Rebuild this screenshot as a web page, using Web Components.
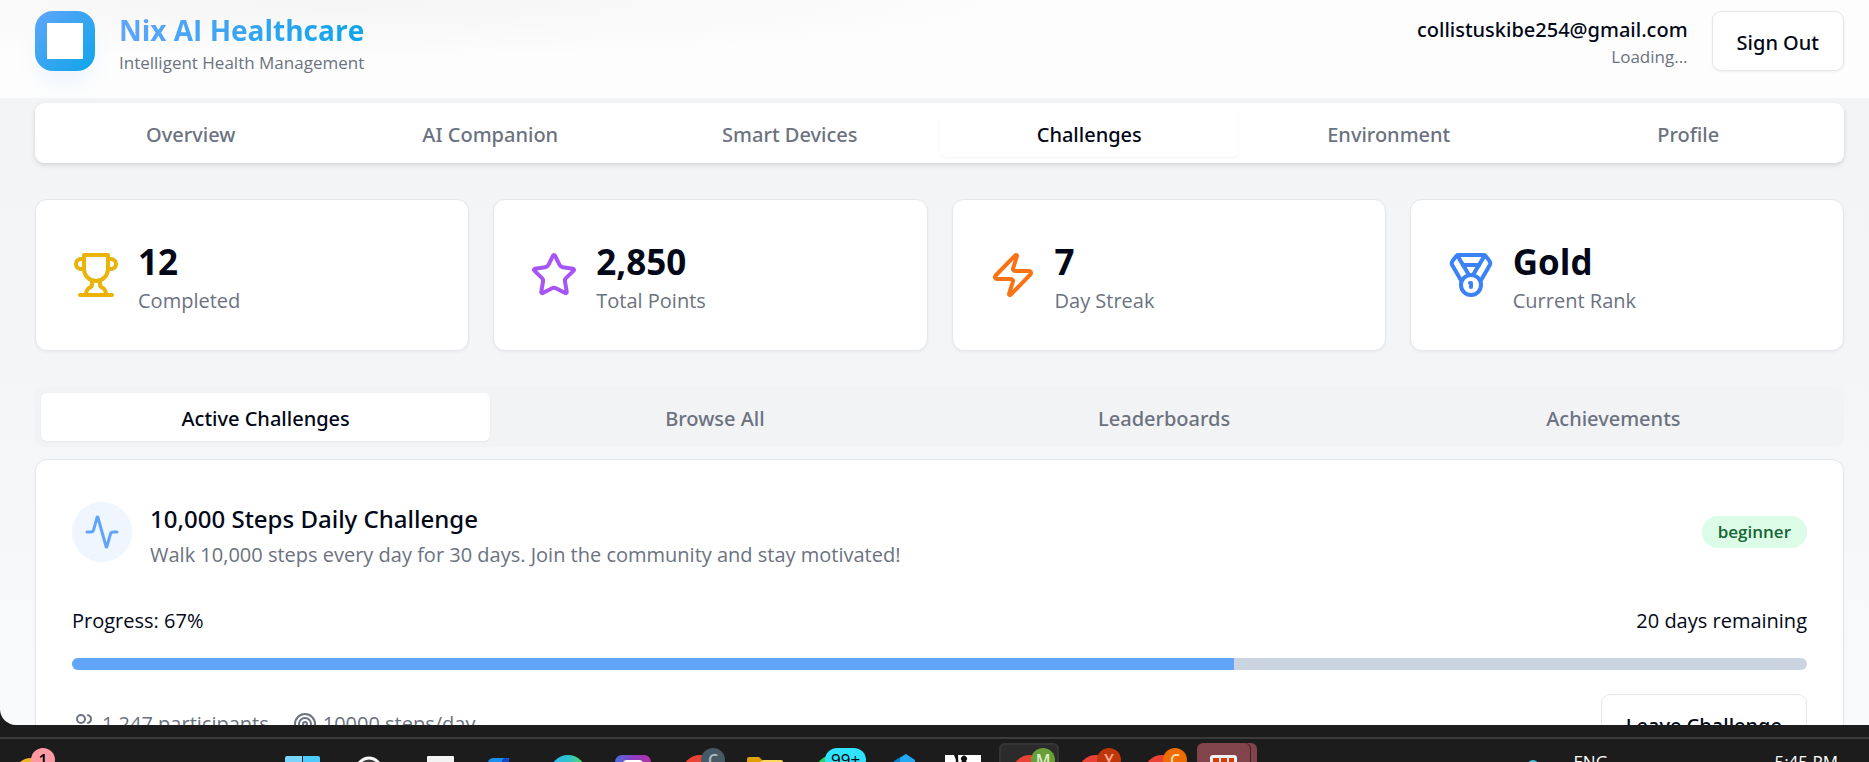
<!DOCTYPE html>
<html lang="en">
<head>
<meta charset="utf-8">
<title>Nix AI Healthcare</title>
<style>
    html{
        --ink:#020817;
        --muted:#6b7280;
        --line:#e5e7eb;
        --blue:#60a5fa;
        --sm:17px;
        --medium:500 20px/30px "Noto Sans","Open Sans",sans-serif;
        font-family:"Open Sans","Noto Sans",sans-serif;
        font-size:20px;
        line-height:30px;
        color:var(--ink);
    }
    body{
        margin:0;
        height:100vh;
        display:flex;
        flex-direction:column;
        overflow:hidden;
        background:#1c1c1c;
    }
</style>
</head>
<body>
<app-window>
    <app-header heading="Nix AI Healthcare" tagline="Intelligent Health Management" email="collistuskibe254@gmail.com" status="Loading..."></app-header>
    <app-main>
        <tab-bar class="raised" label="Sections" items="Overview,AI Companion,Smart Devices,Challenges,Environment,Profile" active="3"></tab-bar>
        <stat-grid>
            <stat-card value="12" label="Completed" icon="trophy" color="#eab308"></stat-card>
            <stat-card value="2,850" label="Total Points" icon="star" color="#a855f7"></stat-card>
            <stat-card value="7" label="Day Streak" icon="zap" color="#f97316"></stat-card>
            <stat-card value="Gold" label="Current Rank" icon="medal" color="#3b82f6"></stat-card>
        </stat-grid>
        <tab-bar class="flat" label="Challenge views" items="Active Challenges,Browse All,Leaderboards,Achievements" active="0"></tab-bar>
        <challenge-card progress="67" remaining="20 days remaining" level="beginner" people="1,247 participants" goal="10000 steps/day">
            <span slot="title">10,000 Steps Daily Challenge</span>
            <span slot="text">Walk 10,000 steps every day for 30 days. Join the community and stay motivated!</span>
        </challenge-card>
    </app-main>
</app-window>
<task-bar>
    <task-item slot="start" icon="weather" name="Widgets" badge="1" tint="#ff99a4" ink="#000000"></task-item>
    <task-item icon="start" name="Start"></task-item>
    <task-item icon="search" name="Search"></task-item>
    <task-item icon="view" name="Task view"></task-item>
    <task-item icon="mail" name="Mail"></task-item>
    <task-item icon="edge" name="Edge"></task-item>
    <task-item icon="chat" name="Chat"></task-item>
    <task-item icon="chrome" name="Chrome" badge="C" tint="#455a64" ink="#b0bec5"></task-item>
    <task-item icon="folder" name="Files"></task-item>
    <task-item icon="phone" name="Messages" badge="99+" tint="#30e3ff" ink="#000000"></task-item>
    <task-item icon="box" name="Editor"></task-item>
    <task-item icon="photo" name="Photo"></task-item>
    <task-item icon="chrome" name="Chrome" badge="M" tint="#689f38" ink="#dcedc8" state="open"></task-item>
    <task-item icon="chrome" name="Chrome" badge="Y" tint="#bf360c" ink="#ffab91"></task-item>
    <task-item icon="chrome" name="Chrome" badge="C" tint="#ef6c00" ink="#ffe0b2"></task-item>
    <task-item icon="tiles" name="Snipping" state="alert"></task-item>
    <span slot="lang">ENG</span>
    <time slot="clock">5:45 PM</time>
</task-bar>

<script>
const ICONS={
    trophy:'<path d="M6 9H4.5a2.5 2.5 0 0 1 0-5H6"/><path d="M18 9h1.500a2.500 2.500 0 0 0 0-5H18"/><path d="M4 22h16"/><path d="M10 14.660V17c0 .550-.470.980-.970 1.210C7.850 18.750 7 20.240 7 22"/><path d="M14 14.660V17c0 .550.470.980.970 1.210C16.150 18.750 17 20.240 17 22"/><path d="M18 2H6v7a6 6 0 0 0 12 0V2Z"/>',
    star:'<path d="M11.525 2.295a.53.53 0 0 1 .95 0l2.310 4.679a2.123 2.123 0 0 0 1.595 1.160l5.166.756a.53.53 0 0 1 .294.904l-3.736 3.638a2.123 2.123 0 0 0-.611 1.878l.882 5.140a.53.53 0 0 1-.771.560l-4.618-2.428a2.122 2.122 0 0 0-1.973 0L6.396 21.010a.53.53 0 0 1-.770-.560l.881-5.139a2.122 2.122 0 0 0-.611-1.879L2.160 9.795a.53.53 0 0 1 .294-.906l5.165-.755a2.122 2.122 0 0 0 1.597-1.160z"/>',
    zap:'<path d="M4 14a1 1 0 0 1-.78-1.630l9.900-10.200a.5.5 0 0 1 .860.460l-1.920 6.020A1 1 0 0 0 13 10h7a1 1 0 0 1 .780 1.630l-9.900 10.200a.5.5 0 0 1-.860-.460l1.920-6.020A1 1 0 0 0 11 14z"/>',
    medal:'<path d="M7.210 15 2.660 7.140a2 2 0 0 1 .130-2.200L4.400 2.800A2 2 0 0 1 6 2h12a2 2 0 0 1 1.600.8l1.600 2.140a2 2 0 0 1 .140 2.200L16.790 15"/><path d="M11 12 5.120 2.200"/><path d="m13 12 5.880-9.800"/><path d="M8 7h8"/><circle cx="12" cy="17" r="5"/><path d="M12 18v-2h-.5"/>',
    activity:'<path d="M22 12h-2.480a2 2 0 0 0-1.930 1.460l-2.350 8.360a.25.25 0 0 1-.480 0L9.240 2.180a.25.25 0 0 0-.480 0l-2.350 8.360A2 2 0 0 1 4.490 12H2"/>',
    users:'<path d="M16 21v-2a4 4 0 0 0-4-4H6a4 4 0 0 0-4 4v2"/><circle cx="9" cy="7" r="4"/><path d="M22 21v-2a4 4 0 0 0-3-3.870"/><path d="M16 3.130a4 4 0 0 1 0 7.750"/>',
    target:'<circle cx="12" cy="12" r="10"/><circle cx="12" cy="12" r="6"/><circle cx="12" cy="12" r="2"/>'
};

// taskbar glyphs, drawn in a 60x48 cell
const GLYPHS={
    weather:'<circle cx="24" cy="32" r="17" fill="#f0b429"/>',
    start:'<path d="M12 15a2 2 0 0 1 2-2h15v17H12z" fill="#79d5fb"/><path d="M30 13h15a2 2 0 0 1 2 2v15H30z" fill="#4ccbff"/>',
    search:'<circle cx="30" cy="27" r="12" fill="#3a3a3a" stroke="#f5f5f5" stroke-width="3"/>',
    view:'<rect x="22" y="13" width="27" height="27" rx="1" fill="#f3f3f3"/>',
    mail:'<path d="M17 19q1-4 6-4h15v20H14z" fill="#1a8fee"/><path d="M31 19q0-4 4-4t3 4v16h-7z" fill="#1346c8"/>',
    edge:'<defs><linearGradient id="g"><stop offset="0" stop-color="#35b5ee"/><stop offset=".5" stop-color="#2cc3d0"/><stop offset="1" stop-color="#63d85a"/></linearGradient></defs><circle cx="31" cy="30" r="18" fill="url(#g)"/>',
    chat:'<defs><linearGradient id="g"><stop offset="0" stop-color="#4c6ce0"/><stop offset=".5" stop-color="#8b3fc4"/><stop offset="1" stop-color="#b431a4"/></linearGradient></defs><rect x="12" y="12" width="36" height="36" rx="7" fill="url(#g)"/><rect x="19" y="17" width="22" height="24" rx="5" fill="#ffffff"/>',
    chrome:'<circle cx="31" cy="30" r="18" fill="#ea4335"/>',
    folder:'<path d="M12 16q0-2 2-2h10l4 4h20v22H12z" fill="#e0a100"/><path d="M25 19l3-2h18q2 0 2 2v20H25z" fill="#ffd85e"/>',
    phone:'<circle cx="32" cy="30" r="18" fill="#25d366"/>',
    box:'<path d="M30 16l9-5v20l-13 3V19z" fill="#0a7dc4"/><path d="M39 11l9 6v18H33V15z" fill="#23a9f2"/>',
    photo:'<rect x="12" y="12" width="36" height="36" fill="#ffffff"/><path d="M21 12l2 5-2 15h5l-1-20zM29 18a3 3 0 1 1 4 0l2 3v15h-8V21z" fill="#111111"/>',
    tiles:'<rect x="13" y="12" width="27" height="30" rx="3" fill="#eef0f3"/><path d="M16 15h6v5h-6zM24 15h6v5h-6zM32 15h5v5h-5zM16 22h6v5h-6zM24 22h6v5h-6zM32 22h5v5h-5z" fill="#d83b01"/>'
};

function icon(name,size){
    return `<svg width="${size}" height="${size}" viewBox="0 0 24 24" fill="none" stroke="currentColor" stroke-width="2" stroke-linecap="round" stroke-linejoin="round" aria-hidden="true">${ICONS[name]}</svg>`;
}

class BaseElement extends HTMLElement {
    constructor() {
        super();
        this._shadowRoot=this.attachShadow({mode: 'open'});
    }

    connectedCallback() {
        this._shadowRoot.innerHTML=this.template;
    }

    attr(name) {
        return this.getAttribute(name) || '';
    }
}

class AppWindow extends BaseElement {
    get template(){
        return `
        <style>
            :host{
                display:block;
                flex:1;
                min-height:0;
                overflow:hidden;
                border-bottom-left-radius:16px;
                background:linear-gradient(#f3f4f6,#f4f5f7 50%,#f8fafc);
            }
        </style>
        <slot></slot>
        `;
    }
}

class AppMain extends BaseElement {
    get template(){
        return `
        <style>
            :host{
                display:flex;
                flex-direction:column;
                padding:5px 25px 36px 35px;
            }
        </style>
        <slot></slot>
        `;
    }
}

class AppHeader extends BaseElement {
    get template(){
        return `
        <style>
            :host{
                display:block;
                background:radial-gradient(ellipse 720px 60px at 340px 0,#f5f5f5,#fdfdfd);
            }
            header{
                display:flex;
                align-items:flex-start;
                gap:24px;
                padding:11px 25px 21px 35px;
            }
            .logo{
                width:60px;
                height:60px;
                display:grid;
                place-items:center;
                border-radius:18px;
                background:linear-gradient(135deg,#60a5fa,#0ea5e9);
                box-shadow:0 15px 22px -4px rgba(96,165,250,.1);
            }
            .logo i{
                width:36px;
                height:36px;
                background:#ffffff;
            }
            .brand{
                flex:1;
            }
            h1{
                margin:0;
                width:fit-content;
                font-size:28px;
                line-height:38px;
                font-weight:700;
                color:transparent;
                background:linear-gradient(90deg,#60a5fa,#0ea5e9);
                background-clip:text;
            }
            p{
                margin:0;
                font-size:var(--sm);
                line-height:24px;
                color:var(--muted);
            }
            .brand p{
                line-height:28px;
            }
            .user{
                padding-top:4px;
                text-align:right;
            }
            .user b{
                display:block;
                font:var(--medium);
            }
            button{
                height:60px;
                padding:3px 24px 0;
                border:1px solid var(--line);
                border-radius:9px;
                background:#ffffff;
                font:var(--medium);
                color:inherit;
                box-shadow:0 1px 3px rgba(0,0,0,.06);
            }
        </style>
        <header>
            <div class="logo"><i></i></div>
            <div class="brand">
                <h1>${this.attr('heading')}</h1>
                <p>${this.attr('tagline')}</p>
            </div>
            <div class="user">
                <b>${this.attr('email')}</b>
                <p>${this.attr('status')}</p>
            </div>
            <button type="button">Sign Out</button>
        </header>
        `;
    }
}

class TabBar extends BaseElement {
    get template(){
        const active=Number(this.attr('active'));
        const tabs=this.attr('items').split(',').map((text,i)=>
            `<button type="button" role="tab" aria-selected="${i===active}">${text}</button>`
        ).join('');
        return `
        <style>
            :host{
                display:block;
                border-radius:9px;
            }
            :host(.raised){
                background:#ffffff;
                box-shadow:0 2px 5px rgba(0,0,0,.14);
            }
            :host(.flat){
                background:#f2f3f5;
            }
            div{
                display:grid;
                grid-auto-flow:column;
                grid-auto-columns:1fr;
                padding:6px;
            }
            button{
                height:48px;
                padding:3px 0 0;
                border:0;
                border-radius:6px;
                background:none;
                font:var(--medium);
                color:var(--muted);
            }
            button[aria-selected=true]{
                background:#ffffff;
                color:var(--ink);
                box-shadow:0 1px 3px rgba(0,0,0,.05);
            }
        </style>
        <div role="tablist" aria-label="${this.attr('label')}">${tabs}</div>
        `;
    }
}

class StatGrid extends BaseElement {
    get template(){
        return `
        <style>
            :host{
                display:grid;
                grid-template-columns:repeat(4,1fr);
                gap:24px;
                margin:36px 0;
            }
        </style>
        <slot></slot>
        `;
    }
}

class StatCard extends BaseElement {
    get template(){
        return `
        <style>
            :host{
                display:flex;
                align-items:center;
                gap:18px;
                padding:34px 36px;
                border:1px solid var(--line);
                border-radius:12px;
                background:#ffffff;
                box-shadow:0 1px 3px rgba(0,0,0,.05);
            }
            svg{
                color:${this.attr('color')};
            }
            div{
                padding-top:4px;
            }
            strong{
                display:block;
                font-size:35px;
                line-height:48px;
                font-weight:700;
            }
            span{
                display:block;
                color:var(--muted);
            }
        </style>
        ${icon(this.attr('icon'),48)}
        <div>
            <strong>${this.attr('value')}</strong>
            <span>${this.attr('label')}</span>
        </div>
        `;
    }
}

class ChallengeCard extends BaseElement {
    get template(){
        const progress=this.attr('progress');
        return `
        <style>
            :host{
                display:flex;
                flex-direction:column;
                margin-top:12px;
                padding:34px 36px 36px;
                border:1px solid var(--line);
                border-radius:12px;
                background:#ffffff;
                box-shadow:0 1px 3px rgba(0,0,0,.05);
            }
            .row{
                display:flex;
                align-items:center;
                justify-content:space-between;
            }
            .round{
                width:60px;
                height:60px;
                display:grid;
                place-items:center;
                margin-right:18px;
                border-radius:50%;
                background:#eff6ff;
                color:var(--blue);
            }
            .about{
                flex:1;
                padding-top:4px;
            }
            h2{
                margin:0;
                font:var(--medium);
                font-size:24px;
                line-height:42px;
            }
            p{
                margin:0;
                color:var(--muted);
            }
            .level{
                padding:4px 16px;
                border-radius:16px;
                background:#dcfce7;
                color:#166534;
                font-size:var(--sm);
                line-height:24px;
                font-weight:600;
            }
            .status{
                margin:36px 0 22px;
            }
            progress{
                display:block;
                width:100%;
                height:12px;
                margin-bottom:24px;
                border:0;
                border-radius:6px;
                overflow:hidden;
                appearance:none;
                background:#cbd5e1;
            }
            progress::-webkit-progress-bar{
                background:#cbd5e1;
            }
            progress::-webkit-progress-value{
                background:var(--blue);
            }
            .facts{
                display:flex;
                gap:24px;
                color:var(--muted);
            }
            .facts span{
                display:flex;
                align-items:center;
                gap:6px;
            }
            button{
                height:60px;
                padding:3px 24px 0;
                border:1px solid var(--line);
                border-radius:9px;
                background:#ffffff;
                font:var(--medium);
                color:inherit;
            }
        </style>
        <div class="row">
            <div class="round">${icon('activity',36)}</div>
            <div class="about">
                <h2><slot name="title"></slot></h2>
                <p><slot name="text"></slot></p>
            </div>
            <div class="level">${this.attr('level')}</div>
        </div>
        <div class="row status">
            <label for="progress">Progress: ${progress}%</label>
            <span>${this.attr('remaining')}</span>
        </div>
        <progress id="progress" max="100" value="${progress}"></progress>
        <div class="row">
            <div class="facts">
                <span>${icon('users',24)}${this.attr('people')}</span>
                <span>${icon('target',24)}${this.attr('goal')}</span>
            </div>
            <button type="button">Leave Challenge</button>
        </div>
        `;
    }
}

class TaskBar extends BaseElement {
    get template(){
        return `
        <style>
            :host{
                display:block;
                height:25px;
                margin-top:12px;
                border-top:2px solid #3b3b3b;
                box-sizing:border-box;
                overflow:hidden;
                color:#ffffff;
                font-size:var(--sm);
                line-height:24px;
            }
            nav{
                display:flex;
                align-items:flex-start;
                padding:4px 31px 0 7px;
            }
            .apps{
                flex:1;
                display:flex;
                gap:6px;
                padding-left:206px;
            }
            .tray{
                display:flex;
                gap:34px;
                padding-top:7px;
            }
            .dot{
                width:12px;
                height:12px;
                margin-top:10px;
                border-radius:50%;
                background:#4cc2d8;
            }
            .clock{
                width:196px;
                text-align:right;
            }
        </style>
        <nav aria-label="Taskbar">
            <slot name="start"></slot>
            <div class="apps"><slot></slot></div>
            <div class="tray">
                <i class="dot"></i>
                <slot name="lang"></slot>
                <div class="clock"><slot name="clock"></slot></div>
            </div>
        </nav>
        `;
    }
}

class TaskItem extends BaseElement {
    get template(){
        const badge=this.attr('badge');
        return `
        <style>
            :host{
                display:block;
                flex:none;
            }
            button{
                position:relative;
                display:block;
                width:60px;
                height:48px;
                padding:0;
                border:0;
                border-radius:6px;
                background:none;
            }
            :host([state=open]) button{
                background:#2b2b2b;
                box-shadow:inset 0 0 0 2px #353535;
            }
            :host([state=alert]) button{
                width:54px;
                background:#80444a;
                box-shadow:6px 0 0 #80444a,inset -1px 0 0 #3b2224;
            }
            svg{
                display:block;
            }
            span{
                position:absolute;
                top:5px;
                left:32px;
                box-sizing:border-box;
                min-width:24px;
                border-radius:12px;
                background:${this.attr('tint')};
                color:${this.attr('ink')};
                font:600 16px/24px "Open Sans",sans-serif;
                text-align:center;
            }
            .long{
                left:24px;
                padding:0 6px;
                font-weight:400;
                font-size:var(--sm);
            }
            :host([slot=start]) span{
                left:24px;
            }
        </style>
        <button type="button" aria-label="${this.attr('name')}">
            <svg width="60" height="48" viewBox="0 0 60 48" aria-hidden="true">${GLYPHS[this.attr('icon')]}</svg>
            ${badge ? `<span class="${badge.length>1 ? 'long' : 'short'}">${badge}</span>` : ''}
        </button>
        `;
    }
}

customElements.define('app-window', AppWindow);
customElements.define('app-main', AppMain);
customElements.define('app-header', AppHeader);
customElements.define('tab-bar', TabBar);
customElements.define('stat-grid', StatGrid);
customElements.define('stat-card', StatCard);
customElements.define('challenge-card', ChallengeCard);
customElements.define('task-bar', TaskBar);
customElements.define('task-item', TaskItem);
</script>
</body>
</html>
